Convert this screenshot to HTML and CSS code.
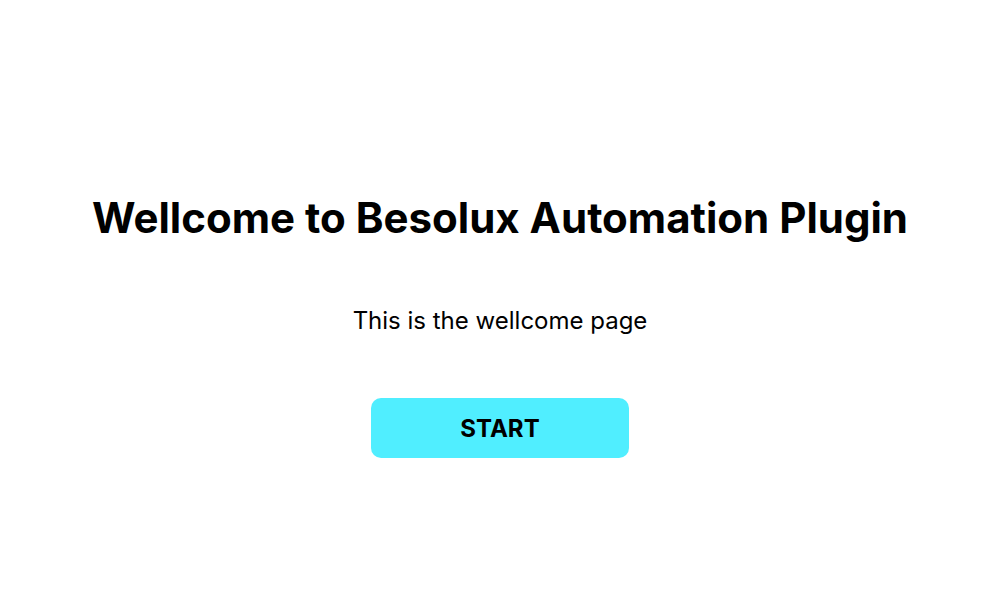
FILE: index.html
```html
<!DOCTYPE html>
<html>
<head>
<meta charset="utf-8">
<link rel="stylesheet" href="styles.css">
</head>
<body>
<main class="welcome">
  <h1 class="title">Wellcome to Besolux Automation Plugin</h1>
  <p class="subtitle">This is the wellcome page</p>
  <button class="start">START</button>
</main>
</body>
</html>
```
FILE: styles.css
```css
html, body {
  margin: 0;
  padding: 0;
  background: #fff;
}
body {
  font-family: "Inter", "Liberation Sans", sans-serif;
  color: #000;
}
.welcome {
  display: flex;
  flex-direction: column;
  align-items: center;
  padding-top: 192px;
}
.title {
  margin: 0;
  font-size: 42px;
  font-weight: 700;
  line-height: 52px;
}
.subtitle {
  margin: 62px 0 0;
  font-size: 24px;
  font-weight: 400;
  line-height: 30px;
}
.start {
  margin-top: 62px;
  width: 258px;
  height: 60px;
  border: none;
  border-radius: 10px;
  background: #50eeff;
  font-family: inherit;
  font-size: 24px;
  font-weight: 700;
  color: #000;
}
```
